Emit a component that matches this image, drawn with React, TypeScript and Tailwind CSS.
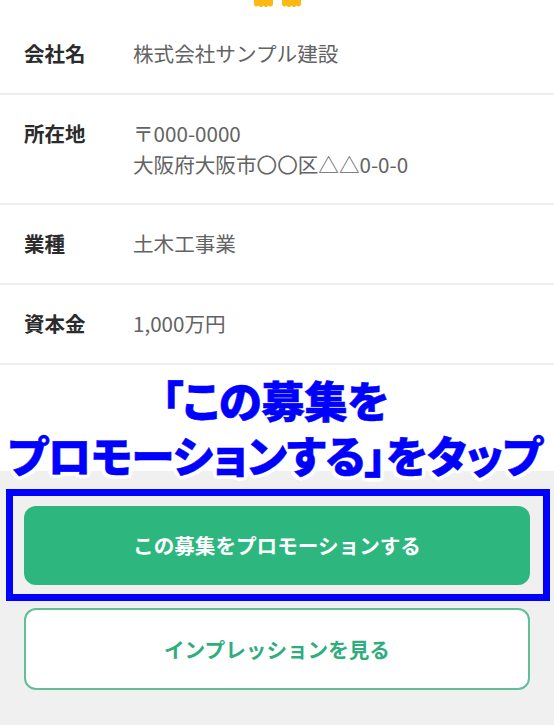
import React from 'react';

const rows = [
  { label: '会社名', lines: ['株式会社サンプル建設'], h: 'h-[80px]' },
  { label: '所在地', lines: ['〒000-0000', '大阪府大阪市〇〇区△△0-0-0'], h: 'h-[110px]' },
  { label: '業種', lines: ['土木工事業'], h: 'h-[80px]' },
  { label: '資本金', lines: ['1,000万円'], h: 'h-[80px]' },
];

const font = { fontFamily: '"Noto Sans CJK JP", "Noto Sans", sans-serif' };

function Paws() {
  return (
    <svg width="47" height="8" viewBox="0 0 47 8" className="block">
      <path d="M0 0h19v3.500q0 3-2.500 3-1.500 0-2-1-1 1.500-2.500 1.500t-2.500-1.500q-1 1.500-2.500 1.500t-2.500-1.500q-.5 1-2 1-2.500 0-2.500-3z" fill="#fcb813" />
      <path d="M28 0h19v3.500q0 3-2.500 3-1.500 0-2-1-1 1.500-2.500 1.500t-2.500-1.500q-1 1.500-2.500 1.500t-2.500-1.500q-.5 1-2 1-2.500 0-2.500-3z" fill="#fcb813" />
    </svg>
  );
}

export default function App() {
  return (
    <div className="relative w-[554px] h-[725px] overflow-hidden bg-white" style={font}>
      <div className="flex justify-center h-[15px]">
        <Paws />
      </div>

      {/* Company info */}
      <div>
        {rows.map((r) => (
          <div key={r.label} className={`flex items-start pl-[24px] pt-[23px] border-b-2 border-[#eeeeee] ${r.h}`}>
            <div className="w-[109px] text-[20.500px] leading-[31px] font-bold text-[#2b2b2b]">{r.label}</div>
            <div className="text-[20.600px] leading-[31px] text-[#636363]">
              {r.lines.map((l) => (
                <div key={l}>{l}</div>
              ))}
            </div>
          </div>
        ))}
      </div>

      {/* Footer buttons */}
      <div className="absolute left-0 right-0 top-[471px] bottom-0 bg-[#f0f0f0] flex flex-col items-center pt-[35px]">
        <button className="w-[506px] h-[79px] rounded-[12px] bg-[#2db77f] text-white text-[20.600px] font-bold">
          この募集をプロモーションする
        </button>
        <button className="mt-[23px] w-[506px] h-[82px] rounded-[12px] bg-white border-2 border-[#5fbf98] text-[#2fae7d] text-[20.600px] font-bold">
          インプレッションを見る
        </button>
      </div>

      {/* Annotation */}
      <div className="absolute left-[6px] top-[489px] w-[544px] h-[112px] border-[7px] border-[#0000ff]" />
      <div className="absolute left-0 right-[4px] top-[372px] text-center text-[43.500px] leading-[55px] font-black text-[#0000ff] whitespace-nowrap [font-feature-settings:'palt'] tracking-[-0.500px] [-webkit-text-stroke:0.500px_#0000ff] [text-shadow:4px_0_0_white,-4px_0_0_white,0_4px_0_white,0_-4px_0_white,3px_3px_0_white,-3px_3px_0_white,3px_-3px_0_white,-3px_-3px_0_white]">
        <div>「この募集を</div>
        <div>プロモーションする」をタップ</div>
      </div>
    </div>
  );
}
